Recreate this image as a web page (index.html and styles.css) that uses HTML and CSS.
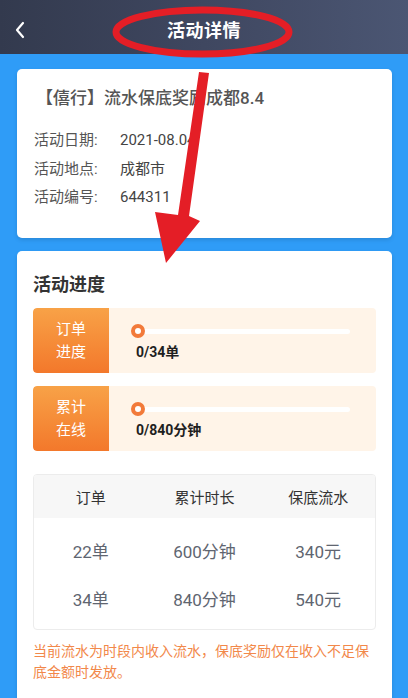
FILE: index.html
```html
<!DOCTYPE html>
<html lang="zh">
<head>
<meta charset="utf-8">
<link rel="stylesheet" href="styles.css">
</head>
<body>
<div class="page">
  <header class="topbar">
    <svg class="back" width="12" height="18" viewBox="0 0 12 18"><polyline points="9,2 3,9 9,16" fill="none" stroke="#fff" stroke-width="2.2" stroke-linecap="round" stroke-linejoin="round"/></svg>
    <div class="title">活动详情</div>
  </header>
  <main class="content">
    <section class="card info">
      <div class="info-title">【僖行】流水保底奖励成都8.4</div>
      <div class="rows">
        <div class="row"><span class="lab">活动日期:</span><span class="val">2021-08.04</span></div>
        <div class="row"><span class="lab">活动地点:</span><span class="val">成都市</span></div>
        <div class="row"><span class="lab">活动编号:</span><span class="val">644311</span></div>
      </div>
    </section>
    <section class="card progress">
      <h2 class="sec-title">活动进度</h2>
      <div class="prog">
        <div class="prog-label">订单<br>进度</div>
        <div class="prog-body">
          <div class="track"><span class="dot"></span></div>
          <div class="prog-text">0/34单</div>
        </div>
      </div>
      <div class="prog">
        <div class="prog-label">累计<br>在线</div>
        <div class="prog-body">
          <div class="track"><span class="dot"></span></div>
          <div class="prog-text">0/840分钟</div>
        </div>
      </div>
      <div class="table">
        <div class="thead">
          <div>订单</div><div>累计时长</div><div>保底流水</div>
        </div>
        <div class="tbody">
          <div class="tr"><div>22单</div><div>600分钟</div><div>340元</div></div>
          <div class="tr"><div>34单</div><div>840分钟</div><div>540元</div></div>
        </div>
      </div>
      <p class="note">当前流水为时段内收入流水，保底奖励仅在收入不足保底金额时发放。</p>
    </section>
  </main>
  <svg class="annot" width="408" height="698" viewBox="0 0 408 698">
    <ellipse cx="202.5" cy="32" rx="86.5" ry="22" fill="none" stroke="#e41e26" stroke-width="7"/>
    <polygon points="199,72 209,73 189,216 200,221 166,263 155,212 178,215" fill="#e41e26"/>
  </svg>
</div>
</body>
</html>
```
FILE: styles.css
```css
* { box-sizing: border-box; }
html, body { margin: 0; padding: 0; }
body {
  font-family: Roboto, "Noto Sans CJK SC", "Noto Sans", sans-serif;
  background: #2f9cf7;
  width: 408px;
  height: 698px;
  overflow: hidden;
}
.page { position: relative; width: 408px; height: 698px; }
.topbar {
  height: 54px;
  background: linear-gradient(90deg, #333a4e 0%, #3f4760 50%, #4b5673 100%);
  display: flex;
  align-items: center;
  justify-content: center;
  position: relative;
}
.back { position: absolute; left: 14px; top: 21px; }
.title {
  color: #fff;
  font-size: 18px;
  font-weight: 700;
  letter-spacing: 0.5px;
  margin-top: 4px;
}
.content { padding: 15px 16px 0 17px; }
.card {
  background: #fff;
  border-radius: 5px;
  box-shadow: 0 2px 4px rgba(0,0,0,0.12);
}
.info { padding: 17px 17px 27px 17px; height: 169px; }
.info-title {
  font-size: 17px;
  line-height: 24px;
  color: #555;
  font-weight: 500;
  margin-left: 2px;
}
.rows { margin-top: 16px; }
.row {
  display: flex;
  font-size: 15px;
  line-height: 28.5px;
  color: #555;
}
.lab { width: 86px; }
.val { color: #444; }
.progress {
  margin-top: 13px;
  padding: 21px 16px 40px 16px;
}
.sec-title {
  margin: 0;
  font-size: 18px;
  line-height: 26px;
  font-weight: 700;
  color: #333;
}
.prog {
  display: flex;
  height: 65px;
  margin-top: 10px;
  border-radius: 4px;
  background: #fff4e8;
  overflow: hidden;
}
.prog + .prog { margin-top: 13px; }
.prog-label {
  width: 76px;
  background: linear-gradient(180deg, #f8a247 0%, #f3782b 100%);
  color: #fff;
  font-size: 15px;
  line-height: 23px;
  display: flex;
  align-items: center;
  justify-content: center;
  text-align: center;
  border-radius: 4px 0 0 4px;
}
.prog-body { flex: 1; padding: 21px 0 0 24px; }
.track {
  position: relative;
  width: 215px;
  height: 5px;
  margin-left: 2px;
  background: #fff;
  border-radius: 3px;
}
.dot {
  position: absolute;
  left: -4px;
  top: -5px;
  width: 14px;
  height: 14px;
  border-radius: 50%;
  border: 4px solid #f27a3a;
  background: #fff;
}
.prog-text {
  margin-top: 8px;
  font-size: 14px;
  line-height: 20px;
  font-weight: 700;
  color: #1f1f1f;
  margin-left: 3px;
}
.table {
  margin-top: 23px;
  border: 1px solid #ececec;
  border-radius: 4px;
  overflow: hidden;
}
.thead, .tr {
  display: grid;
  grid-template-columns: 1fr 1fr 1fr;
  text-align: center;
}
.thead {
  height: 43px;
  background: #f7f7f7;
  align-items: center;
  font-size: 15px;
  color: #333;
}
.tbody { padding: 8px 0 7px; }
.tr {
  height: 48px;
  align-items: center;
  font-size: 17px;
  color: #606570;
}
.note {
  margin: 11px 0 0;
  font-size: 14px;
  line-height: 21px;
  color: #f2884a;
}
.annot { position: absolute; left: 0; top: 0; pointer-events: none; }
```
